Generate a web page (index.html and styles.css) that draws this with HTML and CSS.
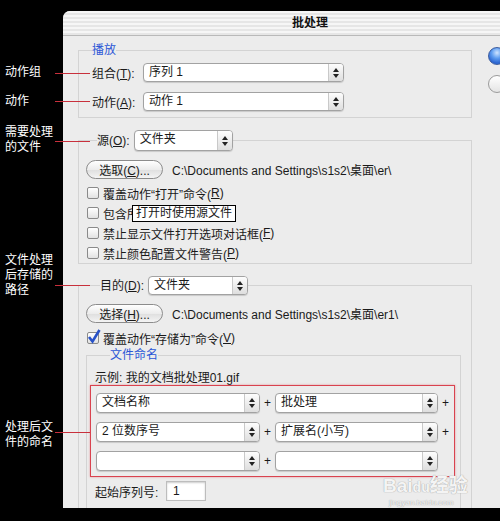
FILE: index.html
```html
<!DOCTYPE html>
<html lang="zh-CN">
<head>
  <meta charset="UTF-8">
  <title>批处理</title>
  <link rel="stylesheet" href="styles.css">
</head>
<body>
<div class="page">

  <!-- 左侧说明 -->
  <div class="notes">
    <div class="note n1">动作组</div>
    <div class="note n2">动作</div>
    <div class="note n3">需要处理<br>的文件</div>
    <div class="note n4">文件处理<br>后存储的<br>路径</div>
    <div class="note n5">处理后文<br>件的命名</div>
  </div>

  <div class="dialog">
    <div class="titlebar">批处理</div>

    <div class="body">
      <div class="main">

        <fieldset class="group g1">
          <legend class="blue">播放</legend>
          <div class="row">
            <span class="lbl">组合(<u>T</u>):</span>
            <div class="select w201"><span class="val">序列 1</span><span class="step"><svg width="6" height="10" viewBox="0 0 6 10"><polygon points="3,0 6,4 0,4"/><polygon points="0,6 6,6 3,10"/></svg></span></div>
          </div>
          <div class="row gap">
            <span class="lbl">动作(<u>A</u>):</span>
            <div class="select w201"><span class="val">动作 1</span><span class="step"><svg width="6" height="10" viewBox="0 0 6 10"><polygon points="3,0 6,4 0,4"/><polygon points="0,6 6,6 3,10"/></svg></span></div>
          </div>
        </fieldset>

        <fieldset class="group g2">
          <legend class="inline src">
            <span>源(<u>O</u>):</span>
            <div class="select w99 tall"><span class="val">文件夹</span><span class="step"><svg width="6" height="10" viewBox="0 0 6 10"><polygon points="3,0 6,4 0,4"/><polygon points="0,6 6,6 3,10"/></svg></span></div>
          </legend>
          <div class="pathrow">
            <button class="pill">选取(<u>C</u>)...</button>
            <span class="path">C:\Documents and Settings\s1s2\桌面\er\</span>
          </div>
          <div class="checks">
            <div class="check"><span class="box"></span>覆盖动作“打开”命令(<u>R</u>)</div>
            <div class="check tipped"><span class="box"></span>包含所有子文件夹(<u>I</u>)<span class="tooltip">打开时使用源文件</span></div>
            <div class="check"><span class="box"></span>禁止显示文件打开选项对话框(<u>F</u>)</div>
            <div class="check"><span class="box"></span>禁止颜色配置文件警告(<u>P</u>)</div>
          </div>
        </fieldset>

        <fieldset class="group g3">
          <legend class="inline dst">
            <span>目的(<u>D</u>):</span>
            <div class="select w100"><span class="val">文件夹</span><span class="step"><svg width="6" height="10" viewBox="0 0 6 10"><polygon points="3,0 6,4 0,4"/><polygon points="0,6 6,6 3,10"/></svg></span></div>
          </legend>
          <div class="pathrow">
            <button class="pill">选择(<u>H</u>)...</button>
            <span class="path">C:\Documents and Settings\s1s2\桌面\er1\</span>
          </div>
          <div class="check single"><span class="box on"><svg width="14" height="15" viewBox="0 0 14 15"><path d="M2 8 L5.5 12.5 L12.5 1" fill="none" stroke="#2852c8" stroke-width="2.6"/></svg></span>覆盖动作“存储为”命令(<u>V</u>)</div>

          <fieldset class="group naming">
            <legend class="blue">文件命名</legend>
            <div class="example">示例: 我的文档批处理01.gif</div>
            <div class="redbox">
              <div class="namerow">
                <div class="select w164"><span class="val">文档名称</span><span class="step"><svg width="6" height="10" viewBox="0 0 6 10"><polygon points="3,0 6,4 0,4"/><polygon points="0,6 6,6 3,10"/></svg></span></div>
                <span class="plus">+</span>
                <div class="select w163"><span class="val">批处理</span><span class="step"><svg width="6" height="10" viewBox="0 0 6 10"><polygon points="3,0 6,4 0,4"/><polygon points="0,6 6,6 3,10"/></svg></span></div>
                <span class="plus">+</span>
              </div>
              <div class="namerow">
                <div class="select w164"><span class="val">2 位数序号</span><span class="step"><svg width="6" height="10" viewBox="0 0 6 10"><polygon points="3,0 6,4 0,4"/><polygon points="0,6 6,6 3,10"/></svg></span></div>
                <span class="plus">+</span>
                <div class="select w163"><span class="val">扩展名(小写)</span><span class="step"><svg width="6" height="10" viewBox="0 0 6 10"><polygon points="3,0 6,4 0,4"/><polygon points="0,6 6,6 3,10"/></svg></span></div>
                <span class="plus">+</span>
              </div>
              <div class="namerow">
                <div class="select w164"><span class="val"></span><span class="step"><svg width="6" height="10" viewBox="0 0 6 10"><polygon points="3,0 6,4 0,4"/><polygon points="0,6 6,6 3,10"/></svg></span></div>
                <span class="plus">+</span>
                <div class="select w163"><span class="val"></span><span class="step"><svg width="6" height="10" viewBox="0 0 6 10"><polygon points="3,0 6,4 0,4"/><polygon points="0,6 6,6 3,10"/></svg></span></div>
              </div>
            </div>
            <div class="startrow">
              <span class="startlbl">起始序列号:</span>
              <span class="numfield">1</span>
            </div>
          </fieldset>
        </fieldset>

      </div>

      <div class="side">
        <span class="radio on"></span>
        <span class="radio"></span>
      </div>
    </div>

    <div class="watermark">Bai<span class="du">du</span>经验<div class="wm-url">jingyan.baidu.com</div></div>
  </div>

</div>
</body>
</html>
```

FILE: styles.css
```css
body {
  margin: 0;
  background: #000;
  font-family: "Liberation Sans", "Noto Sans CJK SC", sans-serif;
  font-size: 12px;
  color: #1a1a1a;
  overflow: hidden;
}
.page {
  display: flex;
  width: 500px;
  height: 521px;
}

/* notes on the left */
.notes {
  width: 58px;
  flex: none;
  padding: 65px 0 0 5px;
  color: #fff;
  line-height: 15px;
}
.note {
  position: relative;
}
.note::after {
  content: "";
  position: absolute;
  left: 50px;
  width: 35px;
  height: 1px;
  background: #c8303c;
  z-index: 2;
}
.n1::after { top: 8px; }
.n2 { margin-top: 14px; }
.n2::after { top: 7px; }
.n3 { margin-top: 16px; }
.n3::after { top: 16px; }
.n4 { margin-top: 98px; }
.n4::after { top: 32px; }
.n5 { margin-top: 122px; }
.n5::after { top: 12px; }

/* dialog */
.dialog {
  position: relative;
  flex: none;
  width: 437px;
  height: 497px;
  margin-top: 11px;
  background: #ececec;
  border-top-left-radius: 7px;
  overflow: hidden;
}
.titlebar {
  height: 24px;
  line-height: 24px;
  padding-left: 229px;
  font-weight: bold;
  font-size: 12px;
  color: #111;
  border-bottom: 1px solid #b9b9b9;
  background: repeating-linear-gradient(#f6f6f6 0 2px, #e6e6e6 2px 4px);
}
.body {
  display: flex;
  padding-left: 15px;
}
.main {
  width: 394px;
  flex: none;
}
.side {
  display: flex;
  flex-direction: column;
  margin-left: 16px;
  padding-top: 11px;
}
.radio {
  width: 16px;
  height: 16px;
  border-radius: 50%;
  border: 1px solid #9a9a9a;
  background: linear-gradient(#fff, #e4e4e4);
  margin-bottom: 10px;
}
.radio.on {
  border-color: #3b5b9e;
  background: radial-gradient(circle at 50% 30%, #cfe4ff 0, #5d9cf0 40%, #2a63cf 75%, #4b8de6 100%);
}

/* group boxes */
.group {
  margin: 0;
  border: 1px solid #d3d3d3;
  min-width: 0;
}
legend {
  padding: 0;
  line-height: 14px;
}
.blue {
  color: #2b57d6;
}
.g1 {
  margin-top: 7px;
  padding: 6px 0 6px 13px;
}
.g2 {
  margin-top: 12px;
  padding: 9px 0 0 7px;
  border-bottom: 1px solid #d3d3d3;
}
.g3 {
  margin-top: 12px;
  padding: 9px 0 0 7px;
}
.inline {
  display: flex;
  align-items: center;
  gap: 4px;
}
.src { margin-left: 11px; }
.dst { margin-left: 14px; }

.row {
  display: flex;
  align-items: center;
}
.row.gap {
  margin-top: 10px;
}
.lbl {
  width: 51px;
}

/* popup selects */
.select {
  display: flex;
  height: 19px;
  box-sizing: border-box;
  border: 1px solid #a2a2a2;
  border-radius: 4px;
  background: #fff;
  box-shadow: 0 1px 1px rgba(0,0,0,0.15);
  overflow: hidden;
}
.select.tall { height: 21px; }
.val {
  flex: 1;
  padding-left: 5px;
  line-height: 17px;
  white-space: nowrap;
}
.step {
  width: 14px;
  display: flex;
  align-items: center;
  justify-content: center;
  border-left: 1px solid #c9c9c9;
  background: linear-gradient(#fdfdfd, #dedede);
}
.step svg { fill: #222; }
.w201 { width: 201px; }
.w99 { width: 99px; }
.w100 { width: 100px; }
.w164 { width: 164px; height: 20px; }
.w163 { width: 163px; height: 20px; }

/* buttons and paths */
.pathrow {
  display: flex;
  align-items: center;
}
.pill {
  width: 77px;
  height: 19px;
  padding: 0;
  font: inherit;
  color: #1a1a1a;
  border: 1px solid #8c8c8c;
  border-radius: 10px;
  background: linear-gradient(#fff, #ececec 50%, #dedede 51%, #f4f4f4);
}
.path {
  margin-left: 9px;
  white-space: nowrap;
}

/* checkboxes */
.checks {
  margin-top: 4px;
}
.check {
  display: flex;
  align-items: center;
  height: 20px;
  white-space: nowrap;
}
.check.single {
  margin-top: 5px;
}
.box {
  position: relative;
  width: 12px;
  height: 12px;
  box-sizing: border-box;
  margin: 0 4px 0 1px;
  border: 1px solid #8a8a8a;
  border-radius: 2px;
  background: linear-gradient(#fff, #e2e2e2);
  flex: none;
}
.box svg {
  position: absolute;
  left: -1px;
  top: -4px;
}
.tipped {
  position: relative;
}
.tooltip {
  position: absolute;
  left: 46px;
  top: 2px;
  height: 15px;
  line-height: 15px;
  padding: 0 3px;
  border: 1px solid #000;
  background: #fff;
}

/* naming */
.naming {
  width: 375px;
  box-sizing: border-box;
  margin-top: 0;
  padding: 9px 0 20px 8px;
}
.naming legend {
  margin-left: 15px;
}
.example {
  line-height: 14px;
}
.redbox {
  width: 365px;
  box-sizing: border-box;
  margin-left: -5px;
  padding: 7px 0 5px 5px;
  border: 1px solid #d9434f;
  box-shadow: 0 0 2px rgba(220,60,70,0.5);
  display: flex;
  flex-direction: column;
  gap: 9px;
}
.namerow {
  display: flex;
  align-items: center;
}
.plus {
  width: 15px;
  text-align: center;
}
.startrow {
  display: flex;
  align-items: center;
  margin-top: 4px;
}
.startlbl {
  width: 71px;
}
.numfield {
  width: 40px;
  height: 20px;
  box-sizing: border-box;
  padding-left: 6px;
  line-height: 18px;
  border: 1px solid #bdbdbd;
  background: #fff;
  box-shadow: inset 0 1px 2px rgba(0,0,0,0.2);
}

/* watermark */
.watermark {
  position: absolute;
  left: 320px;
  top: 464px;
  font-size: 19px;
  font-weight: bold;
  color: rgba(255,255,255,0.9);
  text-shadow: 0 0 1px #aaa, 0 0 1px #aaa;
  line-height: 22px;
}
.du {
  font-size: 14px;
}
.wm-url {
  font-size: 8px;
  font-weight: normal;
  line-height: 10px;
  padding-left: 6px;
}
```
